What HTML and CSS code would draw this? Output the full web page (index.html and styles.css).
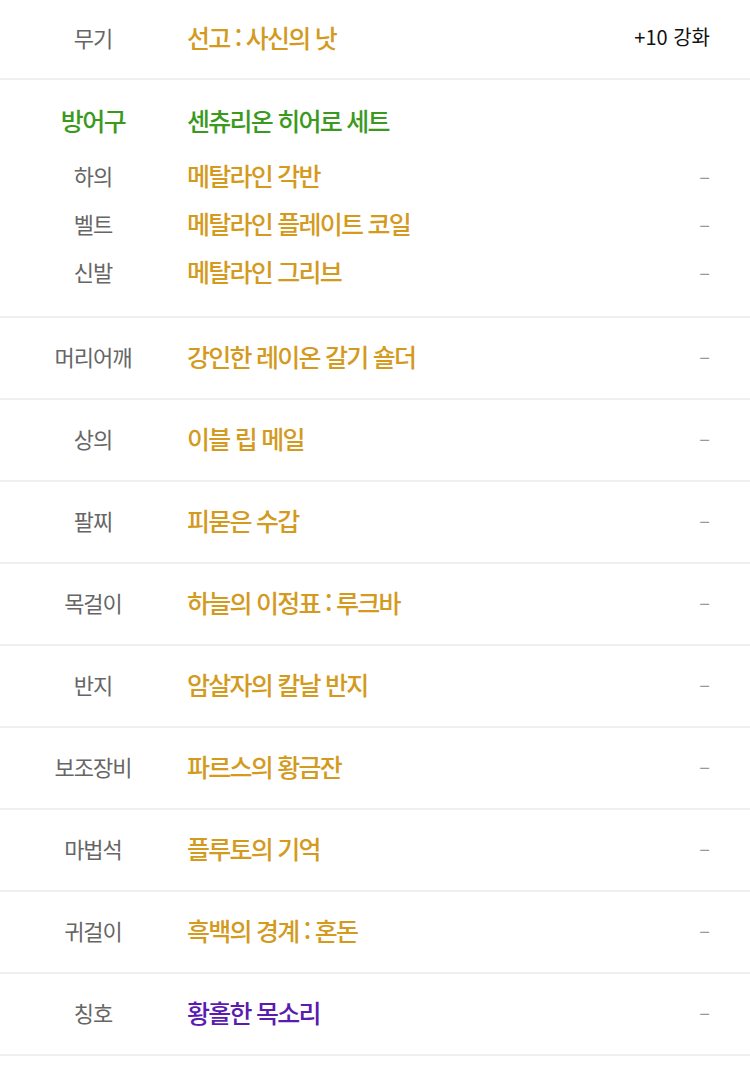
FILE: index.html
```html
<!DOCTYPE html>
<html lang="ko">
<head>
    <meta charset="UTF-8">
    <meta name="viewport" content="width=device-width, initial-scale=1.0">
    <title>장비</title>
    <link rel="stylesheet" href="styles.css">
</head>
<body>

<div class="equip-list">
    <!-- 무기 -->
    <div class="row row-first">
        <span class="label">무기</span>
        <span class="name gold">선고 : 사신의 낫</span>
        <span class="extra strong">+10 강화</span>
    </div>

    <!-- 방어구 세트 -->
    <div class="set-block">
        <div class="set-head">
            <span class="label green">방어구</span>
            <span class="name green">센츄리온 히어로 세트</span>
        </div>
        <div class="sub-row">
            <span class="label">하의</span>
            <span class="name gold">메탈라인 각반</span>
            <span class="extra">–</span>
        </div>
        <div class="sub-row">
            <span class="label">벨트</span>
            <span class="name gold">메탈라인 플레이트 코일</span>
            <span class="extra">–</span>
        </div>
        <div class="sub-row">
            <span class="label">신발</span>
            <span class="name gold">메탈라인 그리브</span>
            <span class="extra">–</span>
        </div>
    </div>

    <div class="row">
        <span class="label">머리어깨</span>
        <span class="name gold">강인한 레이온 갈기 숄더</span>
        <span class="extra">–</span>
    </div>
    <div class="row">
        <span class="label">상의</span>
        <span class="name gold">이블 립 메일</span>
        <span class="extra">–</span>
    </div>
    <div class="row">
        <span class="label">팔찌</span>
        <span class="name gold">피묻은 수갑</span>
        <span class="extra">–</span>
    </div>
    <div class="row">
        <span class="label">목걸이</span>
        <span class="name gold">하늘의 이정표 : 루크바</span>
        <span class="extra">–</span>
    </div>
    <div class="row">
        <span class="label">반지</span>
        <span class="name gold">암살자의 칼날 반지</span>
        <span class="extra">–</span>
    </div>
    <div class="row">
        <span class="label">보조장비</span>
        <span class="name gold">파르스의 황금잔</span>
        <span class="extra">–</span>
    </div>
    <div class="row">
        <span class="label">마법석</span>
        <span class="name gold">플루토의 기억</span>
        <span class="extra">–</span>
    </div>
    <div class="row">
        <span class="label">귀걸이</span>
        <span class="name gold">흑백의 경계 : 혼돈</span>
        <span class="extra">–</span>
    </div>
    <div class="row">
        <span class="label">칭호</span>
        <span class="name purple">황홀한 목소리</span>
        <span class="extra">–</span>
    </div>
</div>

</body>
</html>
```

FILE: styles.css
```css
body {
    margin: 0;
    padding: 0;
    background-color: #ffffff;
    font-family: "Noto Sans CJK KR", "Noto Sans", sans-serif;
    color: #333;
}
.equip-list {
    width: 750px;
}
.row, .sub-row, .set-head {
    display: flex;
    align-items: center;
    box-sizing: border-box;
}
.row {
    height: 82px;
    padding-bottom: 5px;
    border-bottom: 2px solid #efefef;
}
.row-first {
    height: 80px;
}
.set-block {
    padding: 18px 0 19px;
    border-bottom: 2px solid #efefef;
}
.set-head {
    height: 48px;
    padding-bottom: 5px;
    margin-bottom: 7px;
}
.sub-row {
    height: 48px;
    padding-bottom: 4px;
}
.label {
    width: 186px;
    flex-shrink: 0;
    text-align: center;
    font-size: 22px;
    letter-spacing: -1px;
    color: #666;
}
.name {
    flex: 1;
    padding-left: 1px;
    font-size: 25px;
    letter-spacing: -1.75px;
    font-weight: 500;
}
.extra {
    padding-right: 40px;
    font-size: 20px;
    color: #999;
}
.extra.strong {
    color: #111;
    letter-spacing: 0;
}
.gold {
    color: #d39a1e;
}
.green {
    color: #3b9a1e;
}
.label.green {
    font-size: 25px;
    letter-spacing: -1.5px;
    font-weight: 500;
}
.purple {
    color: #5b1ab0;
}
```
